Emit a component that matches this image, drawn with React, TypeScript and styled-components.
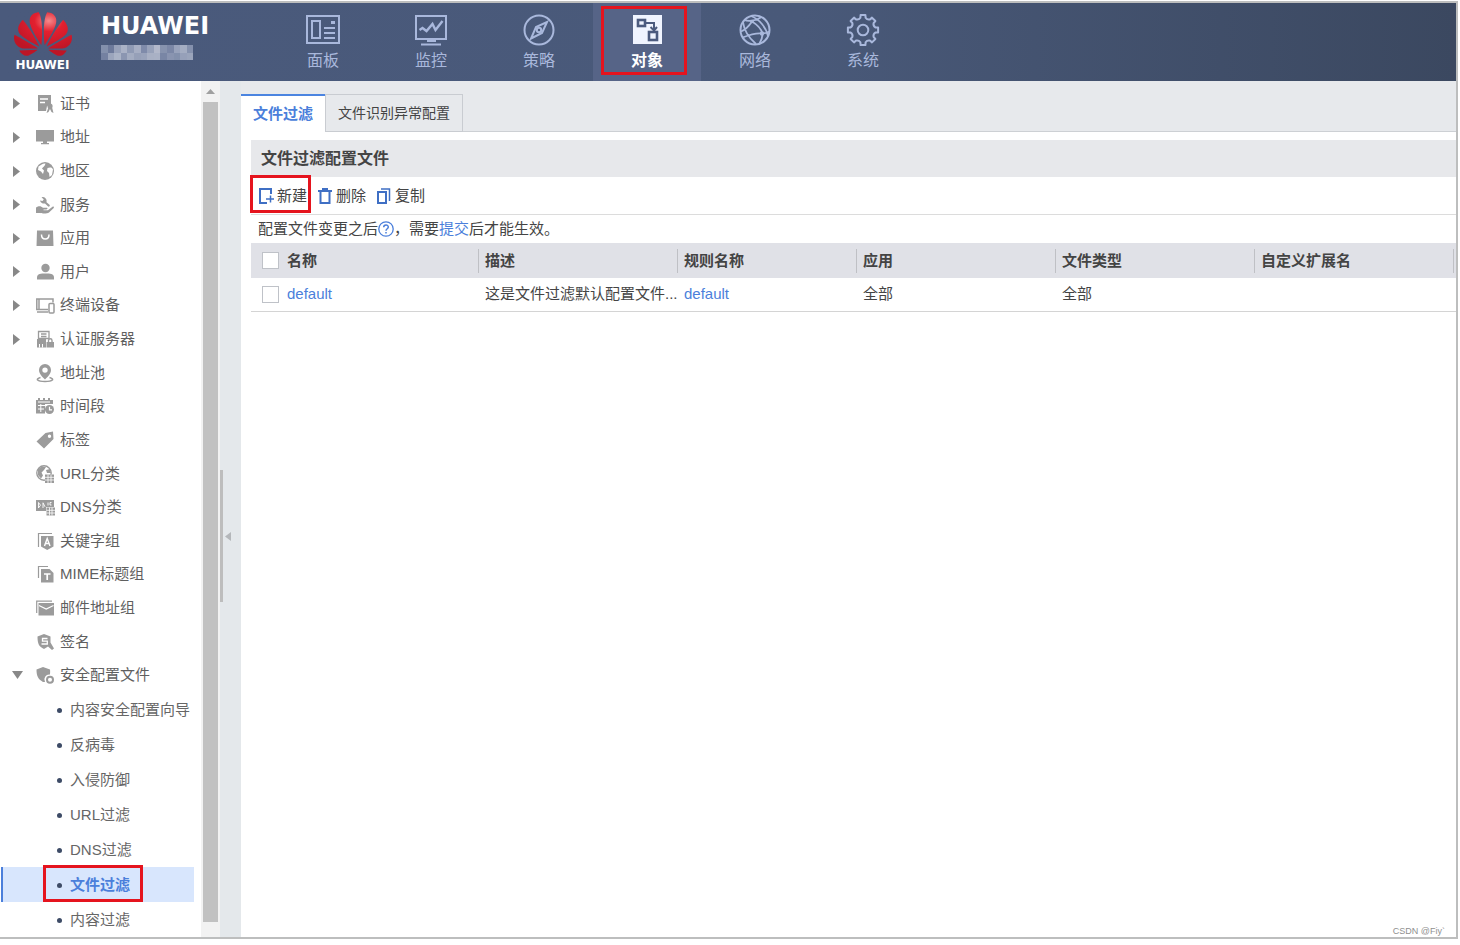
import React from 'react';
import styled, { createGlobalStyle, css } from 'styled-components';
import { SiHuawei } from 'react-icons/si';

const GlobalStyle = createGlobalStyle`
  *, *::before, *::after { box-sizing: border-box; }
  body {
    margin: 0;
    background: #fff;
    color: #444;
    font: 15px/20px "Liberation Sans", "Noto Sans CJK SC", sans-serif;
  }
  button { font: inherit; color: inherit; background: none; border: 0; padding: 0; cursor: pointer; }
  a { color: #4b7fdb; text-decoration: none; }
  ul { list-style: none; margin: 0; padding: 0; }
  h1, h2, p { margin: 0; }
  svg { display: block; flex: none; }
`;

const callout = css`
  content: '';
  position: absolute;
  border: 3px solid #e5141e;
  pointer-events: none;
`;

/* ---------- frame ---------- */
const Frame = styled.div`
  display: flex;
  flex-direction: column;
  height: calc(100vh - 7px);
  margin: 1px 2px 0 0;
  border: 2px solid #bdbebe;
  border-left: 0;
  overflow: hidden;
`;

const Header = styled.header`
  display: flex;
  flex: none;
  height: 78px;
  background: linear-gradient(90deg, #4a5a7c 0%, #495979 55%, #3b4860 100%);
`;

const Brand = styled.div`
  display: flex;
  gap: 30px;
  width: 269px;
  padding: 0 0 0 14px;
`;

const Logo = styled.div`
  display: flex;
  flex-direction: column;
  align-items: center;
  width: 57px;
  color: #fff;
  font: bold 12px/12px "DejaVu Sans", sans-serif;
`;

const Flower = styled(SiHuawei)`
  width: 58px;
  height: 58px;
  margin: 2px 0 -4px;
  fill: url(#petal);
`;

const BrandText = styled.div`
  display: flex;
  flex-direction: column;
  gap: 5px;
  padding-top: 9px;
`;

const Product = styled.h1`
  color: #fff;
  font: bold 24px/28px "DejaVu Sans", sans-serif;
`;

const Nav = styled.nav`
  display: flex;
`;

const NavItem = styled.button<{ $active?: boolean }>`
  position: relative;
  display: flex;
  flex-direction: column;
  align-items: center;
  gap: 2px;
  width: 108px;
  padding-top: 10px;
  color: ${p => (p.$active ? '#fff' : '#a9b8dc')};
  background: ${p => (p.$active ? '#566487' : 'transparent')};
  font-size: 16px;
  font-weight: ${p => (p.$active ? 700 : 400)};
  line-height: 24px;
  ${p => p.$active && css`&::after { ${callout} inset: 3px 14px 6px 8px; }`}
`;

const Body = styled.div`
  display: flex;
  flex: 1;
  min-height: 0;
`;

/* ---------- side menu ---------- */
const Side = styled.nav`
  flex: none;
  width: 201px;
  padding-top: 6px;
  overflow: hidden;
`;

const Menu = styled.ul`
  display: grid;
  grid-auto-rows: 1fr;
  height: 605px;
`;

const MenuItem = styled.button`
  display: flex;
  align-items: center;
  width: 100%;
  height: 100%;
  padding-left: 12px;
  color: #5f5f5f;
  svg { color: #9b9b9b; }
`;

const Marker = styled.span`
  width: 24px;
`;

const MenuLabel = styled.span`
  padding-left: 6px;
`;

const SubItem = styled.a<{ $active?: boolean }>`
  position: relative;
  display: flex;
  align-items: center;
  gap: 8px;
  height: 35px;
  margin: 0 7px 0 1px;
  padding: 1px 0 0 54px;
  border-left: 2px solid ${p => (p.$active ? '#4b7fdb' : 'transparent')};
  background: ${p => (p.$active ? '#d8e6fd' : 'transparent')};
  color: ${p => (p.$active ? '#4b7fdb' : '#666')};
  font-weight: ${p => (p.$active ? 700 : 400)};
  &::before {
    content: '';
    width: 5px;
    height: 5px;
    border-radius: 50%;
    background: #3d4b66;
  }
  ${p => p.$active && css`&::after { ${callout} inset: -2px 51px 0 40px; }`}
`;

const Scrollbar = styled.div`
  display: flex;
  flex-direction: column;
  align-items: center;
  flex: none;
  width: 19px;
  padding-bottom: 15px;
  background: #f2f2f2;
`;

const ScrollUp = styled.button`
  display: grid;
  place-items: center;
  height: 21px;
`;

const Thumb = styled.div`
  flex: 1;
  width: 15px;
  background: #c1c1c1;
`;

const Splitter = styled.div`
  display: flex;
  align-items: center;
  gap: 2px;
  flex: none;
  width: 21px;
  padding-top: 54px;
  background: #e4e8eb;
`;

const Grip = styled.span`
  width: 3px;
  height: 132px;
  background: #bdbdbd;
`;

/* ---------- content ---------- */
const Main = styled.main`
  display: flex;
  flex-direction: column;
  flex: 1;
  min-width: 0;
`;

const Tabs = styled.div`
  display: flex;
  align-items: flex-end;
  height: 51px;
  background: linear-gradient(#cdd0d4, #cdd0d4) bottom / 100% 1px no-repeat #e7e9ec;
`;

const Tab = styled.button<{ $active?: boolean }>`
  height: 38px;
  padding: 0 12px;
  font-size: ${p => (p.$active ? 15 : 14)}px;
  font-weight: ${p => (p.$active ? 700 : 400)};
  color: ${p => (p.$active ? '#4b7fdb' : '#444')};
  background: ${p => (p.$active ? '#fff' : 'transparent')};
  border: 1px solid #c9ccd1;
  ${p => p.$active && css`
    border-width: 2px 0 0;
    border-top-color: #4b84e0;
  `}
`;

const Panel = styled.section`
  flex: 1;
  padding: 8px 0 0 10px;
`;

const PanelTitle = styled.h2`
  padding: 0 10px;
  background: #e7e8eb;
  font-size: 16px;
  line-height: 37px;
`;

const Toolbar = styled.div`
  display: flex;
  gap: 10px;
  height: 38px;
  padding-left: 7px;
  border-bottom: 1px solid #dcdcdc;
`;

const Tool = styled.button<{ $marked?: boolean }>`
  position: relative;
  display: flex;
  align-items: center;
  gap: 3px;
  svg { color: #3f6fc4; }
  ${p => p.$marked && css`&::after { ${callout} inset: -2px -4px 1px -8px; }`}
`;

const Note = styled.p`
  display: flex;
  align-items: center;
  height: 28px;
  padding-left: 7px;
  svg { color: #4b7fdb; }
`;

const Table = styled.table`
  width: 100%;
  border-collapse: collapse;
  table-layout: fixed;
  text-align: left;
  th, td { padding: 0; }
  thead { background: #e0e1e7; }
  th { height: 35px; }
  td { height: 33px; border-bottom: 1px solid #d4d4d4; }
`;

const Col = styled.col<{ $w?: number }>`
  width: ${p => (p.$w ? `${p.$w}px` : 'auto')};
`;

const HeadCell = styled.div<{ $first?: boolean; $last?: boolean }>`
  display: flex;
  align-items: center;
  gap: 8px;
  height: 24px;
  padding-left: ${p => (p.$first ? 11 : 6)}px;
  border-left: ${p => (p.$first ? 0 : 1)}px solid #bfc0c5;
  margin-right: ${p => (p.$last ? 2 : 0)}px;
  border-right: ${p => (p.$last ? 1 : 0)}px solid #bfc0c5;
`;

const Cell = styled.div<{ $first?: boolean }>`
  display: flex;
  align-items: center;
  gap: 8px;
  padding-left: ${p => (p.$first ? 11 : 7)}px;
  white-space: nowrap;
`;

const Check = styled.input`
  appearance: none;
  flex: none;
  width: 17px;
  height: 17px;
  margin: 0;
  border: 1px solid #bfc2c8;
  background: #fff;
`;

const Watermark = styled.small`
  align-self: flex-end;
  padding-right: 11px;
  color: #8f8f8f;
  font-size: 9px;
  line-height: 12px;
`;

/* ---------- drawings ---------- */
const MOSAIC = [
  '8390ac', '6d7a9b', '97a1b9', 'aab2c6', '8f9ab4', 'a6aec3', '7f8baa', '98a2ba', 'b2b8ca', '8793ae', '7b87a6', '98a2bb', 'a4adc2', '8591ad',
  '7481a1', '9ba5bc', 'aab3c6', '8b96b1', 'a3acc1', '96a0b8', '99a3bb', 'a8b0c4', 'a9b1c5', '7986a5', '8994b0', '8390ac', '96a0b9', '9aa4bb',
];
const Mosaic = () => (
  <svg width="92" height="15" viewBox="0 0 92 14" preserveAspectRatio="none" shapeRendering="crispEdges" aria-hidden="true">
    {MOSAIC.map((c, i) => (
      <rect key={i} x={(i % 14) * 6.6} y={i < 14 ? 0 : 7} width="6.6" height="7" fill={`#${c}`} />
    ))}
  </svg>
);

const NavSvg = ({ children }: { children: React.ReactNode }) => (
  <svg width="34" height="34" viewBox="0 0 34 34" fill="none" stroke="currentColor" strokeWidth="2" aria-hidden="true">
    {children}
  </svg>
);

const gearPath = () => {
  const at = (deg: number, r: number) => {
    const a = (deg * Math.PI) / 180;
    return `${(17 + r * Math.cos(a)).toFixed(2)} ${(17 + r * Math.sin(a)).toFixed(2)}`;
  };
  let d = '';
  for (let i = 0; i < 8; i++) {
    const t = i * 45;
    d += `${i ? 'L' : 'M'}${at(t - 9, 15.3)}L${at(t + 9, 15.3)}L${at(t + 12, 12.6)}Q${at(t + 22.5, 10.8)} ${at(t + 33, 12.6)}`;
  }
  return d + 'Z';
};

const NAV = [
  { label: '面板', icon: <><rect x="1" y="3" width="32" height="27" /><rect x="6" y="8" width="8" height="17" /><path d="M18 15h11M18 20h11M18 25h11" /><path d="M25 9.500h4" strokeWidth="3" /></> },
  { label: '监控', icon: <><path d="M2 3h30v23H2z" /><path d="M5.500 17l3-2 4 3 6-7 3 6 7-9" strokeWidth="2.400" /><path d="M13 28h9M7 31.500h20" /></> },
  { label: '策略', icon: <><circle cx="17" cy="17" r="14.500" /><path d="M25 9l-5 11-11 5.500 5-11.500z" /><circle cx="17" cy="17" r="2.200" /></> },
  { label: '对象', active: true, icon: <><rect x="3" y="2" width="29" height="29" fill="#f0f4ff" stroke="none" /><g stroke="#4c5b7f" strokeWidth="2.600"><rect x="8" y="7" width="7" height="6" /><rect x="19" y="19" width="8" height="8" /><path d="M15 10h9v7M20.500 14l3.500 3.500 3-3.500" strokeWidth="2" /></g></> },
  { label: '网络', icon: <><circle cx="17" cy="17" r="14.500" /><path d="M6.500 7c3 1.500 11 1.500 17-3M13 3c8 3 15 11 17 20M14 8.500C11 13 7 17 3 18.500M14 8.500c5 3 9 7 10.500 12M24.500 20.500c-6-1-15 2-20 4M24.500 20.500c2 0 5-1 7-2M24.500 20.500c0 4-1 7-3 10M5 9c1 8 6 16 13 22" strokeWidth="1.800" /><circle cx="14" cy="8.500" r="1.800" fill="currentColor" stroke="none" /><circle cx="24" cy="20.500" r="2.200" fill="currentColor" stroke="none" /></> },
  { label: '系统', icon: <><path d={gearPath()} strokeLinejoin="round" /><circle cx="17" cy="17" r="5.300" /></> },
];

const W = { stroke: '#fff', fill: 'none' };
const MENU: { label: string; open?: boolean; leaf?: boolean; icon: React.ReactNode }[] = [
  { label: '证书', icon: <><path d="M2 0h13v10l-4 1-1 5H2z" /><path d="M4 4h8M4 7.500h5" {...W} strokeWidth="1.300" /><circle cx="14" cy="11" r="2.600" /><path d="M12.500 12l-2 6 2-1 1.500-3 1.500 3 2 1-1.500-6z" /></> },
  { label: '地址', icon: <path d="M0 2h18v11.500h-7V15h2v1.200H5V15h2v-1.500H0z" /> },
  { label: '地区', icon: <><circle cx="9" cy="9" r="9" /><path d="M2.500 4.500C5 3 7 1 9.500 1.500 9 4 7 5 6 6.500L8 8.500 7 12 5 9.500 2 8zM11.500 6c2-1 5-1 5.500 1.500l-1 5.500-2.500 2-.5-4-2-2z" fill="#fff" /></> },
  { label: '服务', icon: <><path d="M0 11.500c3-2 5-1.500 7 .300h4c1 .500.500 1.700-1 1.700H7.500v.800H12l4.500-3.500c1.500-.6 2 .4 1 1.500L13 16.500c-2 1.300-7 1-8.500.500L0 17z" /><path d="M5.500 1.200a4 4 0 0 1 5 5l3 2.500a1 1 0 0 1-1.600 1.600L9 7.400a4 4 0 0 1-5-3L6.500 5l1.300-1.500z" /></> },
  { label: '应用', icon: <><path d="M1 1.500h16L17.500 17H.5z" /><path d="M5.500 5.500c0 6 7.500 6 7.500 0" {...W} strokeWidth="1.500" /></> },
  { label: '用户', icon: <><circle cx="9.500" cy="5" r="4.200" /><path d="M1 16.500v-2C1 10.500 5 10.500 9.500 10.500s8.500 0 8.500 4v2z" /></> },
  { label: '终端设备', icon: <g fill="none" stroke="currentColor" strokeWidth="1.500"><path d="M17 6.500V3H.8v10.500H12M3 3v10" /><path d="M1 16h11" /><rect x="13" y="7.500" width="5" height="9.500" rx="1" /></g> },
  { label: '认证服务器', icon: <><path d="M2.500 1.500h10.500v7H2.500zM5 4h5.500M5 6.500h5.500" fill="none" stroke="currentColor" strokeWidth="1.300" /><path d="M1 9h9v8.500H1zM10.500 12H18v5.500h-7.500z" /><path d="M12.500 12v-1.500a1.700 1.700 0 0 1 3.500 0V12" fill="none" stroke="currentColor" strokeWidth="1.400" /><path d="M3.500 14v3.500M6.500 14v3.500" {...W} /></> },
  { label: '地址池', leaf: true, icon: <><path fillRule="evenodd" d="M9 0a6 6 0 0 1 6 6c0 4-3.500 7-6 9.500C6.500 13 3 10 3 6a6 6 0 0 1 6-6zm0 3.400a2.700 2.700 0 1 0 0 5.400 2.700 2.700 0 0 0 0-5.400z" /><path d="M4.500 13.500C-1 15 1 17.500 9 17.500s10-2.500 4.500-4" fill="none" stroke="currentColor" strokeWidth="1.500" /></> },
  { label: '时间段', leaf: true, icon: <><path d="M0 3h2V1h2v2h3V1h2v2h3V1h2v2h3v4H9v9.500H0z" /><path d="M2 8.500h7M2 12h6M4.800 7v8M2 5h12" {...W} strokeWidth="1" /><circle cx="13.500" cy="12.500" r="4.500" /><path d="M13.500 9.800v3h2.500" {...W} strokeWidth="1.200" /></> },
  { label: '标签', leaf: true, icon: <path fillRule="evenodd" d="M9.500 2L17 .5 17.500 8 8 17.500.5 10.500zM13.500 3.500a1.700 1.700 0 1 0 0 3.400 1.700 1.700 0 0 0 0-3.400z" /> },
  { label: 'URL分类', leaf: true, icon: <><circle cx="8" cy="8" r="7.200" fill="none" stroke="currentColor" strokeWidth="1.400" /><path d="M2 4l4-2.500L10 2 8 5 5.500 7.500l1.500 3-2 3L2 10zM10 5l4-1 1 4h-4z" /><path d="M9 9.500h9V18H9z" /><path d="M9 12.300h9M9 15h9M12 9.500V18M15 9.500V18" {...W} strokeWidth=".8" /></> },
  { label: 'DNS分类', leaf: true, icon: <><path d="M0 2h18v7h-8v4H0z" /><path d="M2.500 4.500v5.500M2.500 4.500l2 2.700-2 2.700M7 10V4.800l2 4M12 4.500v3M15.500 4.500h-1.500V7h1.500" {...W} strokeWidth=".9" /><path d="M10.500 9.500H19v8h-8.500z" /><path d="M10.500 12.300H19M10.500 15H19M13.500 9.500v8M16 9.500v8" {...W} strokeWidth=".8" /></> },
  { label: '关键字组', leaf: true, icon: <><path d="M2.500 15V1.500H16" fill="none" stroke="currentColor" strokeWidth="1.200" /><path d="M5 4h12.500v10.500L11.200 18 5 14.500z" /><path d="M8.500 14l2.700-7.500L14 14M9.500 11.500h3.500" {...W} strokeWidth="1.400" /></> },
  { label: 'MIME标题组', leaf: true, icon: <><path d="M2.500 13V1.500H12" fill="none" stroke="currentColor" strokeWidth="1.200" /><path d="M5 4h8.500l4 4v9.500H5z" /><path d="M8 9h6.500M11.200 9v6" {...W} strokeWidth="1.700" /></> },
  { label: '邮件地址组', leaf: true, icon: <><path d="M.7 14V2.200H16" fill="none" stroke="currentColor" strokeWidth="1.200" /><path d="M2.500 4H18v12.500H2.500z" /><path d="M3 6.500l7.200 3.500L17.500 6.500" {...W} strokeWidth="1.200" /></> },
  { label: '签名', leaf: true, icon: <><path d="M8 1l6.500 2.500v6L18 15.500 16 17l-4-3.500L8 16C3 13.500 1.500 11 1.500 3.500z" /><path d="M11.500 5.500h-5v2.700h4.800V11H5.500" {...W} strokeWidth="1.300" /></> },
  { label: '安全配置文件', open: true, icon: <><path d="M7 1l7 2.500c.3 2 0 4 0 5a5 5 0 0 0-5 7.500L7 16C2 13 .5 10 .5 3.500z" /><circle cx="14" cy="13.700" r="3" fill="none" stroke="currentColor" strokeWidth="2" /></> },
];

const SUB = ['内容安全配置向导', '反病毒', '入侵防御', 'URL过滤', 'DNS过滤', '文件过滤', '内容过滤'];
const HEADS = ['描述', '规则名称', '应用', '文件类型', '自定义扩展名'];

const Triangle = ({ d, w, h, color = '#888' }: { d: string; w: number; h: number; color?: string }) => (
  <svg width={w} height={h} viewBox={`0 0 ${w} ${h}`} aria-hidden="true"><path d={d} fill={color} /></svg>
);

const ToolSvg = ({ children }: { children: React.ReactNode }) => (
  <svg width="16" height="18" viewBox="0 0 16 18" fill="none" stroke="currentColor" strokeWidth="2" aria-hidden="true">{children}</svg>
);

export default function App() {
  return (
    <Frame>
      <GlobalStyle />
      <Header>
        <Brand>
          <Logo>
            <svg width="0" height="0" aria-hidden="true">
              <defs>
                <radialGradient id="petal" cx="0.6" cy="0.2" r="0.7">
                  <stop offset="0" stopColor="#f58a8c" />
                  <stop offset="0.35" stopColor="#e2202f" />
                  <stop offset="1" stopColor="#bd1526" />
                </radialGradient>
              </defs>
            </svg>
            <Flower aria-hidden="true" />
            HUAWEI
          </Logo>
          <BrandText>
            <Product>HUAWEI</Product>
            <Mosaic />
          </BrandText>
        </Brand>
        <Nav>
          {NAV.map(n => (
            <NavItem key={n.label} $active={n.active}>
              <NavSvg>{n.icon}</NavSvg>
              {n.label}
            </NavItem>
          ))}
        </Nav>
      </Header>
      <Body>
        <Side>
          <Menu>
            {MENU.map(m => (
              <li key={m.label}>
                <MenuItem>
                  <Marker>
                    {m.open && <Triangle w={11} h={8} d="M0 0h11l-5.500 8z" />}
                    {!m.open && !m.leaf && <Triangle w={8} h={11} d="M1 0l7 5.500L1 11z" />}
                  </Marker>
                  <svg width="18" height="18" viewBox="0 0 18 18" fill="currentColor" overflow="visible" aria-hidden="true">{m.icon}</svg>
                  <MenuLabel>{m.label}</MenuLabel>
                </MenuItem>
              </li>
            ))}
          </Menu>
          <ul>
            {SUB.map(s => (
              <li key={s}>
                <SubItem href="#" $active={s === '文件过滤'}>{s}</SubItem>
              </li>
            ))}
          </ul>
        </Side>
        <Scrollbar>
          <ScrollUp aria-label="向上滚动"><Triangle w={9} h={5} d="M0 5l4.500-5L9 5z" color="#a0a0a0" /></ScrollUp>
          <Thumb />
        </Scrollbar>
        <Splitter>
          <Grip />
          <Triangle w={6} h={9} d="M6 0v9L0 4.500z" color="#b4b7ba" />
        </Splitter>
        <Main>
          <Tabs>
            <Tab $active>文件过滤</Tab>
            <Tab>文件识别异常配置</Tab>
          </Tabs>
          <Panel>
            <PanelTitle>文件过滤配置文件</PanelTitle>
            <Toolbar>
              <Tool $marked>
                <ToolSvg><path d="M13 7V2H2v14h7" /><path d="M8 12h8M12.500 8.500v7" strokeWidth="1.500" /></ToolSvg>
                新建
              </Tool>
              <Tool>
                <ToolSvg><path d="M1 4h14M5 2h6M3.500 5v11h9V5" /></ToolSvg>
                删除
              </Tool>
              <Tool>
                <ToolSvg><path d="M2 5h8v11H2z" /><path d="M5 2h8.500v12" strokeWidth="1.500" /></ToolSvg>
                复制
              </Tool>
            </Toolbar>
            <Note>
              配置文件变更之后
              <svg width="16" height="16" viewBox="0 0 16 16" fill="none" stroke="currentColor" strokeWidth="1.300" aria-hidden="true">
                <circle cx="8" cy="8" r="7.200" />
                <path d="M5.700 6.300C5.700 3.200 10.300 3.300 10.300 6c0 1.800-2.300 1.700-2.300 3.800M8 11v1.500" strokeWidth="1.500" />
              </svg>
              ，需要<a href="#">提交</a>后才能生效。
            </Note>
            <Table>
              <colgroup>
                <Col $w={227} /><Col $w={199} /><Col $w={179} /><Col $w={199} /><Col $w={199} /><Col />
              </colgroup>
              <thead>
                <tr>
                  <th><HeadCell $first><Check type="checkbox" aria-label="全选" />名称</HeadCell></th>
                  {HEADS.map((h, i) => (
                    <th key={h}><HeadCell $last={i === HEADS.length - 1}>{h}</HeadCell></th>
                  ))}
                </tr>
              </thead>
              <tbody>
                <tr>
                  <td><Cell $first><Check type="checkbox" aria-label="default" /><a href="#">default</a></Cell></td>
                  <td><Cell>这是文件过滤默认配置文件...</Cell></td>
                  <td><Cell><a href="#">default</a></Cell></td>
                  <td><Cell>全部</Cell></td>
                  <td><Cell>全部</Cell></td>
                  <td />
                </tr>
              </tbody>
            </Table>
          </Panel>
          <Watermark>CSDN @Fiy`</Watermark>
        </Main>
      </Body>
    </Frame>
  );
}
